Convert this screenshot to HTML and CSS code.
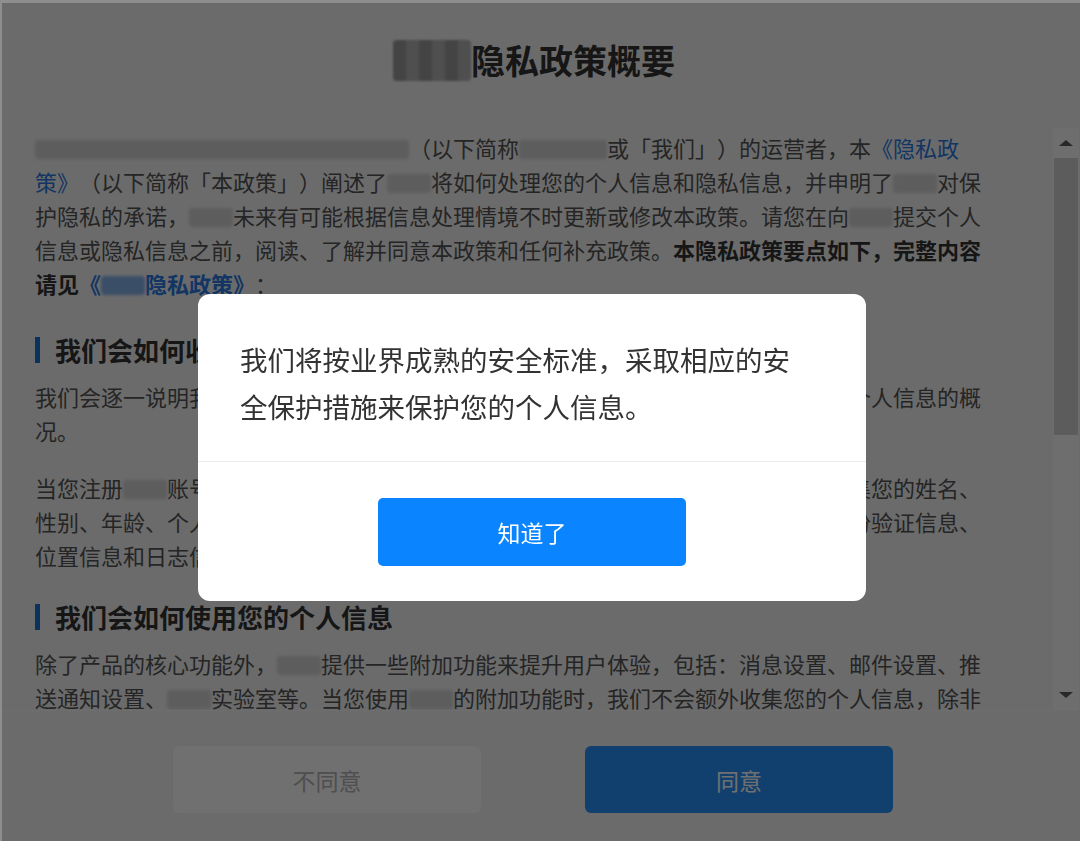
FILE: index.html
```html
<!DOCTYPE html>
<html lang="zh-CN">
<head>
<meta charset="utf-8">
<title>隐私政策概要</title>
<link rel="stylesheet" href="styles.css">
</head>
<body>
<div class="page">
  <header class="page-header">
    <h1 class="page-title"><span class="blur blur-title"></span>隐私政策概要</h1>
  </header>
  <div class="page-body">
    <div class="scroll-content">
      <p class="intro"><span class="blur w17"></span>（以下简称<span class="blur w4"></span>或「我们」）的运营者，本<a href="#" class="link">《隐私政策》</a>（以下简称「本政策」）阐述了<span class="blur w2"></span>将如何处理您的个人信息和隐私信息，并申明了<span class="blur w2"></span>对保护隐私的承诺，<span class="blur w2"></span>未来有可能根据信息处理情境不时更新或修改本政策。请您在向<span class="blur w2"></span>提交个人信息或隐私信息之前，阅读、了解并同意本政策和任何补充政策。<strong>本隐私政策要点如下，完整内容请见<a href="#" class="link">《<span class="blur w2"></span>隐私政策》</a></strong>：</p>
      <h2 class="section-title">我们会如何收集您的个人信息</h2>
      <p>我们会逐一说明我们在您使用<span class="blur w2"></span>产品与服务的场景中，如何收集、使用和存储您的个人信息的概况。</p>
      <p class="gap">当您注册<span class="blur w2"></span>账号或使用<span class="blur w2"></span>服务时，为了向您提供相应的产品功能，我们可能会收集您的姓名、性别、年龄、个人简介、手机号码、电子邮箱地址、所属企业及职务、设备信息、身份验证信息、位置信息和日志信息等。我们会将这些信息用于为您提供服务。</p>
      <h2 class="section-title">我们会如何使用您的个人信息</h2>
      <p>除了产品的核心功能外，<span class="blur w2"></span>提供一些附加功能来提升用户体验，包括：消息设置、邮件设置、推送通知设置、<span class="blur w2"></span>实验室等。当您使用<span class="blur w2"></span>的附加功能时，我们不会额外收集您的个人信息，除非您另行同意或法律法规另有规定。</p>
    </div>
    <div class="scrollbar">
      <div class="sb-btn sb-up"></div>
      <div class="sb-track"><div class="sb-thumb"></div></div>
      <div class="sb-btn sb-down"></div>
    </div>
  </div>
  <footer class="page-footer">
    <button class="btn btn-disagree">不同意</button>
    <button class="btn btn-agree">同意</button>
  </footer>
</div>
<div class="overlay">
  <div class="dialog">
    <div class="dialog-body">我们将按业界成熟的安全标准，采取相应的安全保护措施来保护您的个人信息。</div>
    <div class="dialog-footer"><button class="btn-ok">知道了</button></div>
  </div>
</div>
</body>
</html>
```
FILE: styles.css
```css
* { box-sizing: border-box; }
html { background: #8e8e8e; }
body {
  margin: 0;
  height: 841px;
  border-top: 3px solid #8e8e8e;
  border-left: 2px solid #8e8e8e;
  background: #f3f3f3;
  font-family: "Noto Sans CJK SC", "Microsoft YaHei", sans-serif;
  color: #555;
  overflow: hidden;
  text-spacing-trim: space-all;
}
.page {
  height: 838px;
  display: flex;
  flex-direction: column;
}
.page-header {
  height: 125px;
  flex: none;
  padding: 33px 14px 0 0;
}
.page-title {
  margin: 0;
  font-size: 34px;
  line-height: 48px;
  font-weight: 700;
  color: #333;
  text-align: center;
}
.page-body {
  height: 582px;
  flex: none;
  display: flex;
}
.scroll-content {
  flex: 1;
  min-width: 0;
  overflow: hidden;
  padding: 2px 60px 0 33px;
}
.scroll-content p {
  margin: 0;
  font-size: 22px;
  line-height: 34px;
}
.scroll-content .gap { margin-top: 23px; }
.scroll-content .intro { margin-bottom: 33px; }
.scroll-content strong { color: #333; font-weight: 700; }
.link { color: #2a7ae2; text-decoration: none; }
.section-title {
  display: flex;
  align-items: center;
  gap: 15px;
  margin: 28px 0 12px;
  font-size: 26px;
  line-height: 34px;
  font-weight: 700;
  color: #333;
}
.section-title::before {
  content: "";
  width: 5px;
  height: 26px;
  background: #1a72d8;
  flex: none;
}
.blur {
  display: inline-block;
  height: 0.85em;
  vertical-align: -0.08em;
  background: #d4d4d4;
  border-radius: 4px;
  filter: blur(1.5px);
}
.w2 { width: 2em; }
.w4 { width: 4em; }
.w17 { width: 17em; }
.link .blur { background: #86b2ea; }
.blur-title {
  width: 2.3em;
  height: 1.2em;
  vertical-align: -0.2em;
  background: repeating-linear-gradient(90deg, #9c9c9c 0 13px, #b4b4b4 13px 26px);
  filter: blur(1px);
}
.scrollbar {
  width: 26px;
  margin-right: 1px;
  flex: none;
  display: flex;
  flex-direction: column;
  background: #fafafa;
}
.sb-btn {
  height: 30px;
  flex: none;
  display: flex;
  align-items: center;
  justify-content: center;
}
.sb-up::before {
  content: "";
  border-left: 7px solid transparent;
  border-right: 7px solid transparent;
  border-bottom: 6px solid #5c5c5c;
}
.sb-down::before {
  content: "";
  border-left: 7px solid transparent;
  border-right: 7px solid transparent;
  border-top: 6px solid #5c5c5c;
}
.sb-track {
  flex: 1;
  padding: 0 1px;
}
.sb-thumb {
  height: 277px;
  background: #d2d2d2;
}
.page-footer {
  flex: 1;
  border-top: 1px solid #fbfbfb;
  display: flex;
  justify-content: center;
  align-items: flex-start;
  gap: 104px;
  padding: 35px 16px 0 0;
}
.btn {
  width: 308px;
  height: 67px;
  border: none;
  border-radius: 6px;
  font-family: "Noto Sans CJK SC", "Microsoft YaHei", sans-serif;
  font-size: 23px;
}
.btn-disagree { background: #fefefe; color: #b3b3b3; }
.btn-agree { background: #2a92fa; color: #fff; }
.overlay {
  position: fixed;
  top: 3px;
  left: 2px;
  right: 0;
  bottom: 0;
  background: rgba(0, 0, 0, 0.56);
  display: flex;
  align-items: center;
  justify-content: center;
  padding: 51px 18px 0 0;
}
.dialog {
  width: 668px;
  background: #fff;
  border-radius: 12px;
  overflow: hidden;
}
.dialog-body {
  padding: 42px 70px 31px 42px;
  font-size: 27.5px;
  line-height: 47px;
  color: #333;
  border-bottom: 1px solid #e9e9e9;
}
.dialog-footer {
  padding: 36px 0 35px;
  display: flex;
  justify-content: center;
}
.btn-ok {
  width: 308px;
  height: 68px;
  border: none;
  border-radius: 5px;
  background: #0a84ff;
  color: #fff;
  font-family: "Noto Sans CJK SC", "Microsoft YaHei", sans-serif;
  font-size: 23px;
}
```
